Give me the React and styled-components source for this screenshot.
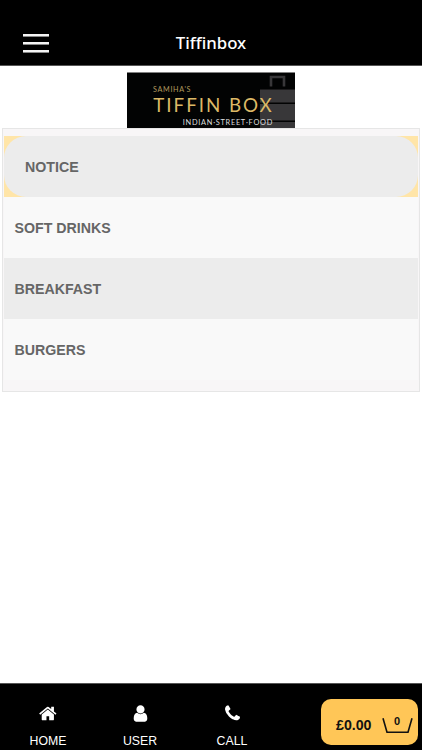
import React from 'react'
import styled, { createGlobalStyle } from 'styled-components'

const GlobalStyle = createGlobalStyle`
    body {
        margin: 0;
        background: #fff;
        font-family: "Liberation Sans", Arial, sans-serif;
    }
    * {
        box-sizing: border-box;
    }
`;

const Container = styled.div`
    display: flex;
    flex-direction: column;
    height: 750px;
    overflow: hidden;
`;

const Header = styled.header`
    display: grid;
    grid-template-columns: 72px 1fr 72px;
    align-items: center;
    height: 66px;
    padding-top: 20px;
    background: #000;
    border-bottom: 1px solid #555;
`;

const MenuButton = styled.button`
    display: flex;
    flex-direction: column;
    gap: 5px;
    width: 26px;
    margin: 1px 0 0 23px;
    padding: 0;
    border: none;
    background: none;
`;

const MenuLine = styled.span`
    height: 3px;
    background: #f4f4f4;
    border-bottom: 1px solid #888;
`;

const Title = styled.h1`
    margin: 0;
    color: #fff;
    font-family: "Noto Sans", sans-serif;
    font-size: 16.8px;
    font-weight: 500;
    font-variant-ligatures: none;
    line-height: 24px;
    text-align: center;
`;

const Content = styled.main`
    flex: 1;
    padding: 6px 2px 0;
`;

const Logo = styled.svg`
    display: block;
    width: 168px;
    height: 56px;
    margin: 0 auto;
`;

const Menu = styled.div`
    height: 264px;
    padding: 7px 0 0 1px;
    border: 1px solid #e6e6e6;
    background: #f8f6f7;
`;

const Category = styled.div`
    width: 414px;
    height: 61px;
    background: ${({ $active }) => ($active ? '#ffe5a8' : 'transparent')};
`;

const CategoryName = styled.div`
    display: flex;
    align-items: center;
    height: 100%;
    padding: 0 ${({ $active }) => ($active ? '21px' : '10.5px')};
    border-radius: ${({ $active }) => ($active ? '22px' : '0')};
    background: ${({ $shaded }) => ($shaded ? '#ececec' : '#f9f9f9')};
    color: #666;
    font-size: 14.2px;
    font-weight: bold;
`;

const Footer = styled.footer`
    display: flex;
    height: 67px;
    padding-left: 2px;
    background: #000;
    border-top: 1px solid #555;
`;

const Tab = styled.div`
    display: flex;
    flex-direction: column;
    align-items: center;
    width: 92px;
    padding-top: 20px;
    color: #fff;
    font-size: 12.3px;
    line-height: 16px;
`;

const TabIcon = styled.svg`
    width: 19px;
    height: 19px;
    margin-bottom: 10px;
    fill: #fff;
`;

const Basket = styled.button`
    display: flex;
    align-items: center;
    width: 97px;
    height: 46px;
    margin: 15px 0 0 43px;
    padding: 6px 0 0 15px;
    border: none;
    border-radius: 10px;
    background: #ffc657;
    color: #111;
    font-family: inherit;
`;

const Total = styled.span`
    width: 46px;
    font-size: 14.2px;
    font-weight: bold;
    text-align: left;
`;

const BasketIcon = styled.svg`
    width: 32px;
    height: 18px;
`;

const categories = ['NOTICE', 'SOFT DRINKS', 'BREAKFAST', 'BURGERS']

const tabs = [
    {
        name: 'HOME',
        path: 'M1408 992v480q0 26-19 45t-45 19h-384v-384h-256v384h-384q-26 0-45-19t-19-45v-480q0-1 .5-3t.5-3l575-474 575 474q1 2 1 6zm223-69l-62 74q-8 9-21 11h-3q-13 0-21-7l-692-577-692 577q-12 8-24 7-13-2-21-11l-62-74q-8-10-7-23.5t11-21.5l719-599q32-26 76-26t76 26l244 204v-195q0-14 9-23t23-9h192q14 0 23 9t9 23v408l219 182q10 8 11 21.5t-7 23.5z',
    },
    {
        name: 'USER',
        path: 'M1536 1399q0 109-62.5 187t-150.5 78h-854q-88 0-150.5-78t-62.5-187q0-85 8.5-160.5t31.5-152 58.5-131 94-89 134.5-34.5q131 128 313 128t313-128q76 0 134.5 34.5t94 89 58.5 131 31.5 152 8.5 160.5zm-256-887q0 159-112.5 271.5t-271.5 112.5-271.5-112.5-112.5-271.5 112.5-271.5 271.5-112.5 271.5 112.5 112.5 271.5z',
    },
    {
        name: 'CALL',
        path: 'M1600 1240q0 27-10 70.5t-21 68.5q-21 50-122 106-94 51-186 51-27 0-53-3.5t-57.5-12.5-47-14.5-55.5-20.5-49-18q-98-35-175-83-127-79-264-216t-216-264q-48-77-83-175-3-9-18-49t-20.5-55.5-14.5-47-12.5-57.5-3.5-53q0-92 51-186 56-101 106-122 25-11 68.5-21t70.5-10q14 0 21 3 18 6 53 76 11 19 30 54t35 63.5 31 53.5q3 4 17.5 25t21.5 35.5 7 28.5q0 20-28.5 50t-62 55-62 53-28.5 46q0 9 5 22.5t8.5 20.5 14 24 11.5 19q76 137 174 235t235 174q2 1 19 11.5t24 14 20.5 8.5 22.5 5q18 0 46-28.5t53-62 55-62 50-28.5q14 0 28.5 7t35.5 21.5 25 17.5q25 15 53.5 31t63.5 35 54 30q70 35 76 53 3 7 3 21z',
    },
]

const BrandLogo = () => (
    <Logo viewBox="0 0 168 56" fontFamily="Lato, sans-serif">
        <path d="M0 .5h168V56H0z" fill="#020303" />
        {/* stacked tiffin tins */}
        <path d="M144 14.5V5h13v9.5" fill="none" stroke="#383739" strokeWidth="2.6" />
        <path d="M133 17.5h35v13h-35zM133 32h35v16.5h-35zM133 50h35v6h-35z" fill="#383739" />
        <text x="26" y="20.3" textLength="37.5" fontSize="7.2" fill="#b29a5e">SAMIHA'S</text>
        <text x="26.3" y="39.8" textLength="118.5" fontSize="18.8" fill="#dcb866">TIFFIN BOX</text>
        <text x="55.8" y="52.6" textLength="89.5" fontSize="7.4" fill="#ddd">INDIAN·STREET·FOOD</text>
    </Logo>
)

const App = () => {
    return (
        <>
            <GlobalStyle />
            <Container>
                <Header>
                    <MenuButton aria-label="Menu">
                        <MenuLine />
                        <MenuLine />
                        <MenuLine />
                    </MenuButton>
                    <Title>Tiffinbox</Title>
                </Header>
                <Content>
                    <BrandLogo />
                    <Menu>
                        {categories.map((name, i) => (
                            <Category key={name} $active={i === 0}>
                                <CategoryName $active={i === 0} $shaded={i % 2 === 0}>{name}</CategoryName>
                            </Category>
                        ))}
                    </Menu>
                </Content>
                <Footer>
                    {tabs.map((tab) => (
                        <Tab key={tab.name}>
                            <TabIcon viewBox="0 0 1792 1792"><path d={tab.path} /></TabIcon>
                            {tab.name}
                        </Tab>
                    ))}
                    <Basket>
                        <Total>£0.00</Total>
                        <BasketIcon viewBox="0 0 32 18">
                            <path d="M1 2.2l4 14h21l4-14" fill="none" stroke="#111" strokeWidth="1.6" />
                            <text x="15" y="8.5" fontSize="11" fontWeight="bold" textAnchor="middle" fill="#111">0</text>
                        </BasketIcon>
                    </Basket>
                </Footer>
            </Container>
        </>
    )
}

export default App
